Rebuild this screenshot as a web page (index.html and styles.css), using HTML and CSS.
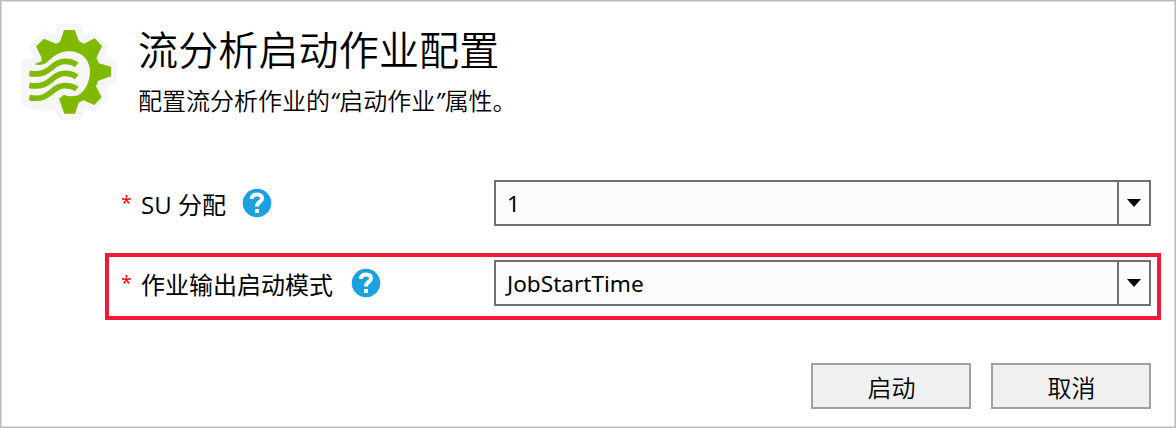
FILE: index.html
```html
<!DOCTYPE html>
<html lang="zh-CN">
<head>
<meta charset="utf-8">
<title>流分析启动作业配置</title>
<link rel="stylesheet" href="styles.css">
</head>
<body>
<main class="dialog">
  <header class="header">
    <svg class="logo" viewBox="33 27 288 288" aria-hidden="true">
      <path class="halo" d="M145 27H211L224 58L247 49L296 94L285 125L321 137V202L288 218L297 250L253 291L224 281L211 315H148L132 280L105 291L60 280L33 270V137L70 127L57 94L102 49L134 58Z"/>
      <path class="gear" d="M162 45H194L207 79L222 86L254 70L276 93L259 129L267 145L303 155V184L265 197L258 214L275 247L253 270L220 256L206 263L195 296H163L147 251L162 239Q177 247 205 241C225 229 240 201 240 169C239 132 214 109 177 109C146 109 129 126 113 140Q96 154 73 148L95 138L94 127L78 94L102 71L138 86L150 80Z"/>
      <path class="wave" d="M58 175C125 186 122 139 164 139Q187 139 200 150M58 211C125 222 122 175 164 175Q187 175 200 186M58 248C125 259 122 212 164 212Q187 212 200 222"/>
    </svg>
    <div class="heading">
      <h1 class="title">流分析启动作业配置</h1>
      <p class="subtitle">配置流分析作业的<span class="quote">“</span>启动作业<span class="quote">”</span>属性。</p>
    </div>
  </header>
  <section class="fields">
    <div class="field">
      <span class="star">*</span>
      <span class="label">SU 分配</span>
      <svg class="help help-near" viewBox="0 0 30 30"><circle cx="15" cy="15" r="14.3"/><path d="M10 11V9.5Q11 6.5 15 6.5Q20 6.5 20 10.5C20 14.5 15 13.5 15 18.5"/><path d="M15 21V25"/></svg>
      <div class="select"><span class="value value-num">1</span><span class="drop"><svg class="arrow" viewBox="0 0 14 8"><path d="M0 0H14L7 8Z"/></svg></span></div>
    </div>
    <div class="field field-marked">
      <span class="star">*</span>
      <span class="label">作业输出启动模式</span>
      <svg class="help" viewBox="0 0 30 30"><circle cx="15" cy="15" r="14.3"/><path d="M10 11V9.5Q11 6.5 15 6.5Q20 6.5 20 10.5C20 14.5 15 13.5 15 18.5"/><path d="M15 21V25"/></svg>
      <div class="select"><span class="value">JobStartTime</span><span class="drop"><svg class="arrow" viewBox="0 0 14 8"><path d="M0 0H14L7 8Z"/></svg></span></div>
    </div>
  </section>
  <footer class="actions">
    <button class="button">启动</button>
    <button class="button">取消</button>
  </footer>
</main>
</body>
</html>
```
FILE: styles.css
```css
* { box-sizing: border-box; }
body {
  margin: 0;
  background: #fff;
  color: #000;
  font-family: "Noto Sans", "Noto Sans CJK SC", sans-serif;
  font-size: 24px;
}
.dialog {
  width: 1176px;
  height: 428px;
  border: 1px solid #b9b9b9;
  box-shadow: inset 0 0 0 1px #dedede;
  overflow: hidden;
}
.header {
  display: flex;
  gap: 21px;
  height: 172px;
  padding: 21px 0 0 20px;
}
.logo { width: 96px; height: 96px; margin-top: 2px; }
.halo { fill: #f6f6f6; }
.gear { fill: #7fba00; }
.wave { fill: none; stroke: #7fba00; stroke-width: 17; }
.title {
  margin: 0;
  font: 350 40px/52px "Noto Sans CJK SC", sans-serif;
  letter-spacing: 0.15px;
}
.subtitle {
  margin: 9px 0 0;
  font: 350 24px/34px "Noto Sans CJK SC", sans-serif;
}
.quote {
  padding-right: 1px;
  font-family: "Open Sans", sans-serif;
  font-style: italic;
  font-weight: 400;
}
.fields {
  display: flex;
  flex-direction: column;
  gap: 13px;
  padding: 0 14px 0 104px;
}
.field {
  display: flex;
  align-items: center;
  height: 67px;
  border: 4px solid transparent;
  padding: 0 6px 7px 12px;
}
.field-marked { border-color: #f01a38; }
.star {
  width: 20px;
  color: #f00;
  font: 400 20px/34px "Open Sans", sans-serif;
}
.label {
  padding-top: 4px;
  font: 400 24px/34px "Open Sans", "Noto Sans CJK SC", sans-serif;
}
.help { width: 30px; height: 30px; margin-left: 18px; }
.help-near { margin-left: 16px; }
.help circle { fill: #1ba1e2; }
.help path { fill: none; stroke: #fff; stroke-width: 4; }
.select {
  display: flex;
  width: 657px;
  height: 46px;
  margin-left: auto;
  border: 2px solid #707070;
  background: #fcfcfc;
}
.value { flex: 1; padding-left: 11px; line-height: 43px; font-size: 22.6px; }
.drop {
  display: flex;
  align-items: center;
  justify-content: center;
  width: 32px;
  border-left: 2px solid #707070;
}
.arrow { width: 14px; height: 8px; }
.actions {
  display: flex;
  justify-content: flex-end;
  gap: 20px;
  padding: 43px 24px 0 0;
}
.button {
  width: 160px;
  height: 46px;
  padding: 1px 0 0 1px;
  border: 2px solid #a0a0a0;
  background: #f0f0f0;
  color: #000;
  font: 350 24px/41px "Noto Sans CJK SC", sans-serif;
}
```
